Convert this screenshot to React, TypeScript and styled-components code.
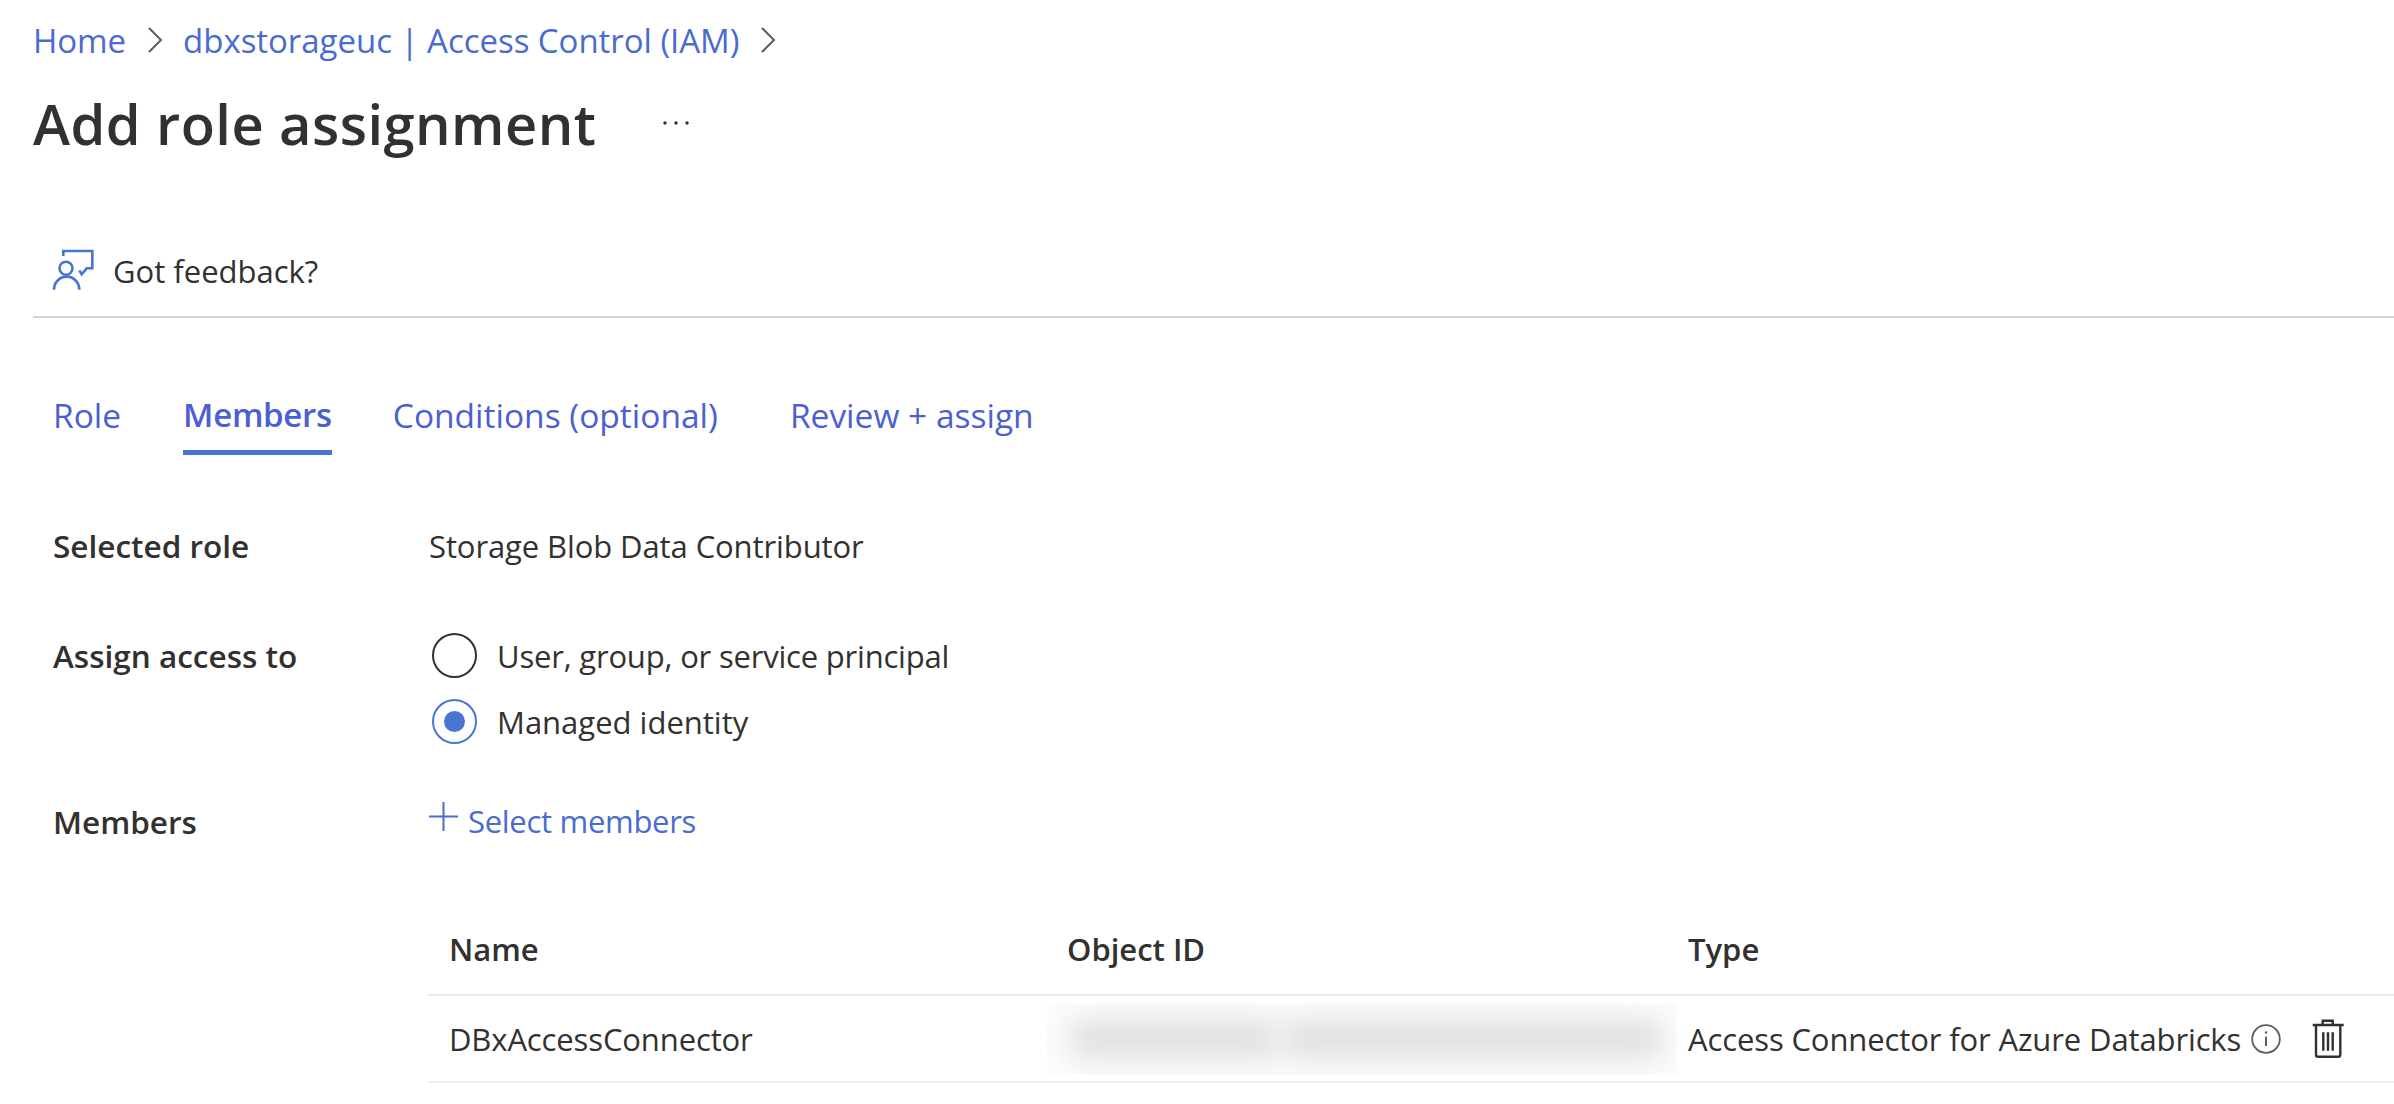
import React from "react";
import styled, { createGlobalStyle } from "styled-components";

const Global = createGlobalStyle`
  html, body { margin: 0; padding: 0; background: #fff; overflow: hidden; }
  body { font-family: "Open Sans", "Noto Sans", "Liberation Sans", sans-serif; color: #323130; }
`;

const Page = styled.div`
  width: 2394px;
  height: 1104px;
  box-sizing: border-box;
  padding-left: 33px;
  display: flex;
  flex-direction: column;
`;

const Breadcrumb = styled.nav`
  height: 80px;
  display: flex;
  align-items: center;
  font-size: 33px;
  letter-spacing: -0.04px;
  color: #4a6bd0;
`;

const Crumb = styled.span``;

const Chevron = styled.svg`
  width: 16px;
  height: 28px;
  margin: 0 20px 0 21px;
  flex: none;
`;

const TitleRow = styled.div`
  height: 86px;
  display: flex;
  align-items: center;
`;

const Title = styled.h1`
  margin: 0;
  font-size: 56px;
  font-weight: 600;
  letter-spacing: 0.45px;
  color: #323130;
`;

const More = styled.svg`
  width: 28px;
  height: 8px;
  margin-left: 66px;
`;

const Toolbar = styled.div`
  margin-top: 72px;
  height: 80px;
  box-sizing: border-box;
  padding: 0 0 12px 17px;
  display: flex;
  align-items: center;
  gap: 19px;
  border-bottom: 2px solid #d4d4d4;
  font-size: 31px;
`;

const FeedbackIcon = styled.svg`
  width: 44px;
  height: 44px;
  margin-bottom: 4px;
  flex: none;
`;

const Tabs = styled.div`
  margin-top: 60px;
  padding-left: 20px;
  height: 77px;
  display: flex;
`;

const Tab = styled.div<{ $active?: boolean; $gap: number }>`
  margin-right: ${(p) => p.$gap}px;
  height: 77px;
  padding-top: 16px;
  box-sizing: border-box;
  font-size: ${(p) => (p.$active ? 33 : 33.5)}px;
  line-height: 42px;
  color: #4a5fd2;
  font-weight: ${(p) => (p.$active ? 600 : 400)};
  letter-spacing: ${(p) => (p.$active ? -0.3 : 0)}px;
  border-bottom: 5px solid ${(p) => (p.$active ? "#4a74d4" : "transparent")};
`;

const Form = styled.div`
  margin-top: 70px;
  padding-left: 20px;
  display: grid;
  grid-template-columns: 376px 1fr;
  font-size: 31px;
  letter-spacing: -0.1px;
`;

const Label = styled.div<{ $top: number }>`
  font-weight: 600;
  font-size: 31.5px;
  letter-spacing: 0;
  padding-top: ${(p) => p.$top}px;
  line-height: 42px;
`;

const Value = styled.div<{ $top: number }>`
  padding-top: ${(p) => p.$top}px;
  line-height: 42px;
`;

const RadioGroup = styled.div`
  padding-top: 66px;
  margin-left: 3px;
  display: flex;
  flex-direction: column;
  gap: 21px;
`;

const RadioRow = styled.div<{ $spacing: number }>`
  display: flex;
  align-items: center;
  height: 45px;
  gap: 20px;
  letter-spacing: ${(p) => p.$spacing}px;
`;

const RadioMark = styled.span<{ $on?: boolean }>`
  width: 45px;
  height: 45px;
  box-sizing: border-box;
  border-radius: 50%;
  border: 2px solid ${(p) => (p.$on ? "#4a74d4" : "#323130")};
  display: flex;
  align-items: center;
  justify-content: center;
  flex: none;
  &::after {
    content: "";
    display: ${(p) => (p.$on ? "block" : "none")};
    width: 21px;
    height: 21px;
    border-radius: 50%;
    background: #4a74d4;
  }
`;

const AddLink = styled.div`
  padding-top: 54px;
  display: flex;
  align-items: center;
  gap: 10px;
  color: #4a6bd0;
  line-height: 42px;
  letter-spacing: -0.3px;
`;

const Plus = styled.svg`
  width: 29px;
  height: 29px;
  margin-bottom: 8px;
  flex: none;
`;

const Table = styled.div`
  margin: 61px 0 0 395px;
  font-size: 31px;
  letter-spacing: -0.12px;
`;

const Row = styled.div<{ $height: number; $color: string }>`
  display: grid;
  grid-template-columns: 619px 630px 1fr;
  height: ${(p) => p.$height}px;
  border-bottom: 2px solid ${(p) => p.$color};
  align-items: center;
`;

const HeadCell = styled.div<{ $pad: number }>`
  font-weight: 600;
  letter-spacing: 0;
  padding-left: ${(p) => p.$pad}px;
`;

const Cell = styled.div<{ $pad: number }>`
  padding-left: ${(p) => p.$pad}px;
  display: flex;
  align-items: center;
  white-space: nowrap;
`;

const Redacted = styled.div`
  height: 72px;
  overflow: hidden;
  display: flex;
  align-items: center;
  gap: 8px;
  padding-left: 24px;
  background: #fcfcfc;
`;

const Blob = styled.div<{ $w: number }>`
  width: ${(p) => p.$w}px;
  height: 38px;
  background: #dfdfdf;
  filter: blur(14px);
  flex: none;
`;

const InfoIcon = styled.svg`
  width: 32px;
  height: 32px;
  margin-left: 9px;
  flex: none;
`;

const TrashIcon = styled.svg`
  width: 36px;
  height: 42px;
  margin-left: 29px;
  flex: none;
`;

export default function App() {
  return (
    <>
      <Global />
      <Page>
        <Breadcrumb>
          <Crumb>Home</Crumb>
          <Chevron viewBox="0 0 16 28"><polyline points="2,2 14,14 2,26" fill="none" stroke="#605e5c" strokeWidth="2" /></Chevron>
          <Crumb>dbxstorageuc | Access Control (IAM)</Crumb>
          <Chevron viewBox="0 0 16 28"><polyline points="2,2 14,14 2,26" fill="none" stroke="#605e5c" strokeWidth="2" /></Chevron>
        </Breadcrumb>
        <TitleRow>
          <Title>Add role assignment</Title>
          <More viewBox="0 0 28 8">
            <circle cx="3" cy="4" r="1.7" fill="#323130" />
            <circle cx="14" cy="4" r="1.7" fill="#323130" />
            <circle cx="25" cy="4" r="1.7" fill="#323130" />
          </More>
        </TitleRow>
        <Toolbar>
          <FeedbackIcon viewBox="0 0 44 44" fill="none" stroke="#4a74d4" strokeWidth="2.6">
            <path d="M13.3 9V4H42.3V21.3H36.7L31.7 27.3L29.3 23.3" />
            <circle cx="16" cy="21.3" r="6.5" />
            <path d="M4 42.7a12.6 13 0 0 1 25.3 0" />
          </FeedbackIcon>
          <span>Got feedback?</span>
        </Toolbar>
        <Tabs>
          <Tab $gap={62}>Role</Tab>
          <Tab $active $gap={61}>Members</Tab>
          <Tab $gap={72}>Conditions (optional)</Tab>
          <Tab $gap={0}>Review + assign</Tab>
        </Tabs>
        <Form>
          <Label $top={0}>Selected role</Label>
          <Value $top={0}>Storage Blob Data Contributor</Value>
          <Label $top={68}>Assign access to</Label>
          <RadioGroup>
            <RadioRow $spacing={-0.2}><RadioMark /><span>User, group, or service principal</span></RadioRow>
            <RadioRow $spacing={0}><RadioMark $on /><span>Managed identity</span></RadioRow>
          </RadioGroup>
          <Label $top={57}>Members</Label>
          <AddLink>
            <Plus viewBox="0 0 29 29"><path d="M14.5 0V29M0 14.5H29" stroke="#4a6bd0" strokeWidth="2" fill="none" /></Plus>
            <span>Select members</span>
          </AddLink>
        </Form>
        <Table>
          <Row $height={90} $color="#ebebeb">
            <HeadCell $pad={21}>Name</HeadCell>
            <HeadCell $pad={20}>Object ID</HeadCell>
            <HeadCell $pad={11}>Type</HeadCell>
          </Row>
          <Row $height={85} $color="#f0f0f0">
            <Cell $pad={21}>DBxAccessConnector</Cell>
            <Redacted><Blob $w={205} /><Blob $w={378} /></Redacted>
            <Cell $pad={11}>
              <span>Access Connector for Azure Databricks</span>
              <InfoIcon viewBox="0 0 32 32" fill="none" stroke="#605e5c">
                <circle cx="16" cy="16" r="13.8" strokeWidth="1.8" />
                <path d="M16 13.5V23" strokeWidth="2" />
                <circle cx="16" cy="9.5" r="1.2" fill="#605e5c" stroke="none" />
              </InfoIcon>
              <TrashIcon viewBox="0 0 36 42" fill="none" stroke="#323130" strokeWidth="2.4">
                <path d="M1.7 7H32.7M11.7 7V2.7H21.7V7" />
                <path d="M5 7V36.7Q5 38.7 7 38.7H27.3Q29.3 38.7 29.3 36.7V7" />
                <path d="M12.3 14.3V32.7M17 14.3V32.7M21.7 14.3V32.7" />
              </TrashIcon>
            </Cell>
          </Row>
        </Table>
      </Page>
    </>
  );
}
